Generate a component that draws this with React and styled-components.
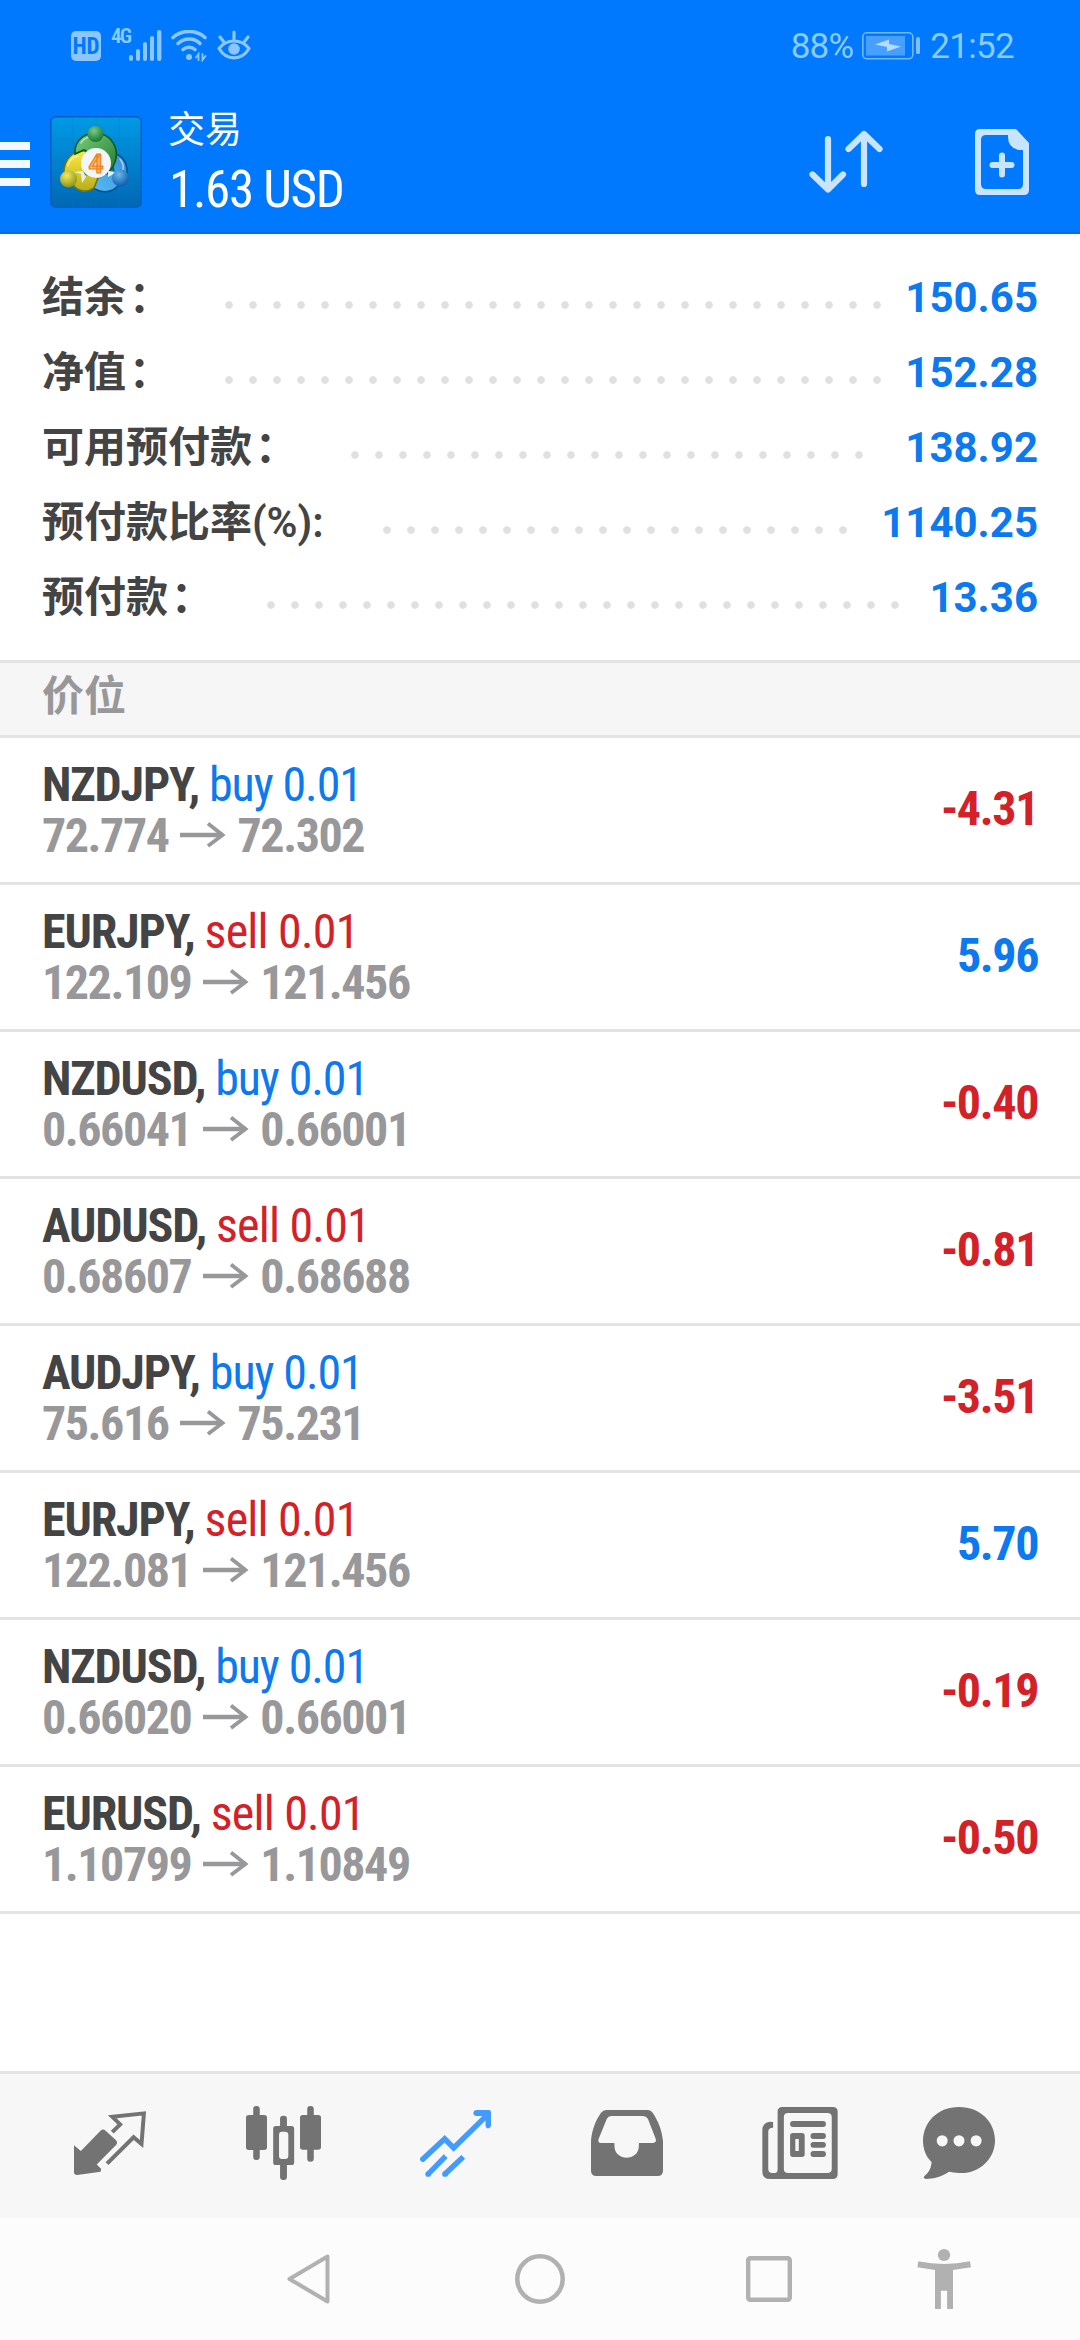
import React from 'react';
import styled, { createGlobalStyle } from 'styled-components';

const BLUE = '#0079ff';
const TEXT_BLUE = '#0c79ef';
const TEXT_RED = '#d42027';
const GRAY = '#737373';

const Global = createGlobalStyle`
    body {
        margin: 0;
        background: #fff;
        font-family: Roboto, 'Noto Sans CJK SC', sans-serif;
    }
    svg {
        display: block;
        flex: none;
    }
`
const Screen = styled.div`
    width: 1080px;
    height: 2340px;
    display: flex;
    flex-direction: column;
    overflow: hidden;
`

/* header */
const Header = styled.header`
    height: 232px;
    background: ${BLUE};
    border-bottom: 2px solid #0a6ce0;
`
const StatusBar = styled.div`
    height: 92px;
    padding: 0 66px 0 71px;
    box-sizing: border-box;
    display: flex;
    align-items: center;
    color: #8accff;
    font-size: 35px;
`
const HdBadge = styled.span`
    width: 30px;
    height: 30px;
    margin-right: 10px;
    border-radius: 5px;
    background: #8cc6ff;
    color: ${BLUE};
    font: 700 23px/31px 'Roboto Condensed', Roboto, sans-serif;
    text-align: center;
`
const Network = styled.span`
    align-self: flex-start;
    width: 18px;
    margin-top: 24px;
    font: 600 21px/24px 'Roboto Condensed', Roboto, sans-serif;
    letter-spacing: -1.8px;
`
const StatusIcons = styled.div`
    display: flex;
    align-items: center;
    gap: 9px;
    flex: 1;
`
const Percent = styled.span`
    margin-right: 9px;
    letter-spacing: -0.8px;
`
const Clock = styled.span`
    margin-left: 10px;
    letter-spacing: -0.7px;
`
const AppBar = styled.div`
    height: 140px;
    padding-right: 51px;
    display: flex;
    align-items: center;
`
const Menu = styled.div`
    width: 30px;
    margin: 4px 20px 0 0;
    display: flex;
    flex-direction: column;
    gap: 10px;
`
const MenuLine = styled.i`
    height: 8px;
    background: #f2f9ff;
`
const Heading = styled.div`
    flex: 1;
    margin: -2px 0 0 26px;
    color: #fff;
`
const Title = styled.div`
    font-size: 37px;
    line-height: 58px;
`
const Total = styled.div`
    font: 400 51px/60px 'Roboto Condensed', Roboto, sans-serif;
    letter-spacing: -1.3px;
    padding-left: 1px;
`
const Actions = styled.div`
    display: flex;
    align-items: center;
    gap: 92px;
`

/* account summary */
const Summary = styled.section`
    padding: 26px 42px 25px;
    border-bottom: 3px solid #e3e3e3;
`
const SummaryRow = styled.div`
    height: 75px;
    display: flex;
    font-size: 42px;
    font-weight: 700;
    line-height: 75px;
    white-space: nowrap;
`
const Label = styled.span`
    color: #444;
`
const Unit = styled.span`
    margin-right: 2px;
    font-weight: 600;
`
const Colon = styled.span`
    padding-left: 3px;
    margin-right: -3px;
`
const Dots = styled.span`
    width: ${(p) => p.$count * 24}px;
    margin-left: 49px;
    background: radial-gradient(circle at 12px 45px, #e0e0e0 3.4px, transparent 4.2px) 0 0 / 24px 75px repeat-x;
`
const Amount = styled.span`
    margin-left: auto;
    color: ${TEXT_BLUE};
`

/* positions */
const SectionTitle = styled.h2`
    height: 72px;
    margin: 0;
    padding-left: 42px;
    border-bottom: 3px solid #e3e3e3;
    background: #f6f6f6;
    color: #98989a;
    font-size: 42px;
    font-weight: 700;
    line-height: 68px;
`
const Position = styled.div`
    height: 144px;
    padding: 0 42px;
    border-bottom: 3px solid #e3e3e3;
    display: flex;
    align-items: center;
    justify-content: space-between;
    font: 700 48px/51px 'Roboto Condensed', Roboto, sans-serif;
`
const Info = styled.div`
    margin-bottom: 1px;
`
const Symbol = styled.div`
    color: #444;
    letter-spacing: -1.15px;
`
const Side = styled.span`
    color: ${(p) => (p.$sell ? TEXT_RED : TEXT_BLUE)};
    font-weight: 400;
    letter-spacing: ${(p) => (p.$sell ? -0.8 : -1.1)}px;
`
const Prices = styled.div`
    display: flex;
    align-items: center;
    gap: 11.5px;
    color: #98989a;
    letter-spacing: -1.45px;
`
const Profit = styled.div`
    margin-bottom: 3px;
    color: ${(p) => (p.$loss ? TEXT_RED : TEXT_BLUE)};
    letter-spacing: -1.4px;
`

/* bottom bars */
const Tabs = styled.nav`
    height: 138px;
    margin-top: auto;
    padding: 0 0 6px 74px;
    border-top: 3px solid #e4e4e4;
    background: #f7f7f7;
    display: flex;
    align-items: center;
    gap: 99.5px;

    svg:last-child {
        margin-left: -15px;
    }
`
const NavBar = styled.div`
    height: 122px;
    background: #fcfcfc;
    display: flex;
    align-items: center;
    padding-left: 287px;
`
const NavItem = styled.div`
    margin-right: ${(p) => p.$gap}px;
`

const SignalIcon = () => (
    <svg width="33" height="32" viewBox="0 0 33 32" fill="#8cc6ff">
        <rect x="0" y="25" width="4" height="6" rx="2" />
        <rect x="7" y="19" width="4" height="12" rx="2" />
        <rect x="14" y="12" width="4" height="19" rx="2" />
        <rect x="21" y="6" width="4" height="25" rx="2" />
        <rect x="28" y="0" width="4.4" height="31" rx="2" />
    </svg>
)

const WifiIcon = () => (
    <svg width="37" height="32" viewBox="0 0 37 32" fill="none" stroke="#8cc6ff" strokeWidth="3.6" strokeLinecap="round">
        <path d="M2 7.5C11 -.5 25 -.5 34 7.5" />
        <path d="M7 13.5C13.500 7.500 23 7.500 29 13.500" />
        <path d="M12 19.500C15.500 16.500 20.500 16.500 24 19.500" />
        <circle cx="18" cy="27" r="3" fill="#8cc6ff" stroke="none" />
        <path d="M25 27.500l2.500-3.500v6M31.500 24v6l3-4" strokeWidth="1.800" />
    </svg>
)

const EyeIcon = () => (
    <svg width="34" height="32" viewBox="0 0 34 32" fill="none" stroke="#8cc6ff" strokeWidth="3.2" strokeLinecap="round">
        <path d="M2 18.500C9.500 8.500 24.500 8.500 32 18.500C24.500 31 9.500 31 2 18.500Z" strokeLinejoin="round" />
        <circle cx="17" cy="19" r="5.800" fill="#8cc6ff" stroke="none" />
        <path d="M17 2v7M3 7l3.500 4.500M31 7l-3.500 4.500" />
    </svg>
)

const BatteryIcon = () => (
    <svg width="58" height="28" viewBox="0 0 58 28">
        <rect x=".8" y=".8" width="50" height="26" rx="4" fill="none" stroke="#6fb7ff" strokeWidth="1.600" />
        <rect x="4" y="4" width="39" height="19.500" fill="#479fff" />
        <path d="M13 12.500L27 7.500V12L39 14.500L25 19.500V15Z" fill="#b5dcff" />
        <rect x="54" y="5" width="4" height="17" rx="1.500" fill="#7fbfff" />
    </svg>
)

const Logo = () => (
    <svg width="92" height="92" viewBox="0 0 92 92">
        <defs>
            <linearGradient id="bg" x1="0" y1="0" x2="0" y2="1">
                <stop offset="0" stopColor="#009ae6" />
                <stop offset="1" stopColor="#0068b4" />
            </linearGradient>
            <linearGradient id="green" x1="0" y1="0" x2="1" y2="1">
                <stop offset="0" stopColor="#7ccf7e" />
                <stop offset="1" stopColor="#1f7a2c" />
            </linearGradient>
            <linearGradient id="yellow" x1="0" y1="0" x2="0" y2="1">
                <stop offset="0" stopColor="#ffe83a" />
                <stop offset="1" stopColor="#b7ad1c" />
            </linearGradient>
            <linearGradient id="blue" x1="1" y1="0" x2="0" y2="1">
                <stop offset="0" stopColor="#2f8fdc" />
                <stop offset="1" stopColor="#5cc0f5" />
            </linearGradient>
            <radialGradient id="greenHead" cx=".4" cy=".3" r=".7">
                <stop offset="0" stopColor="#7cc98a" />
                <stop offset="1" stopColor="#157a2e" />
            </radialGradient>
            <radialGradient id="yellowHead" cx=".4" cy=".3" r=".7">
                <stop offset="0" stopColor="#f2ea62" />
                <stop offset="1" stopColor="#8f9512" />
            </radialGradient>
            <radialGradient id="blueHead" cx=".4" cy=".3" r=".7">
                <stop offset="0" stopColor="#6bb8ea" />
                <stop offset="1" stopColor="#0a5fae" />
            </radialGradient>
        </defs>
        <rect x=".8" y=".8" width="90.400" height="90.400" rx="5" fill="url(#bg)" stroke="#0560c4" strokeWidth="1.600" />
        <path d="M0 23H92M0 46H92M0 69H92M23 0V92M46 0V92M69 0V92" stroke="#0a7ac8" strokeWidth=".6" opacity=".5" />
        <g strokeWidth="1.600">
            <path d="M60 37C71 37 78 46 77 58L70 66C66 76 54 78 45 73C40 70 36 65 35 60L46 60L64 56Z" fill="url(#blue)" stroke="#0b4f93" />
            <path d="M36 35C24 33 13 43 14 58L22 66C25 75 36 78 44 72L48 62L34 58Z" fill="url(#yellow)" stroke="#6d7612" />
            <path d="M25 38C24 28 31 19 40 18H51C61 20 68 31 66 42C65 49 62 53 58 56L50 42L34 34Z" fill="url(#green)" stroke="#0c5a1e" />
        </g>
        <path d="M31 27C33 23 36 22 39 21M18 50C19 44 23 41 28 40M70 43C73 47 74 50 73 54" stroke="#fff" strokeWidth="1.600" strokeLinecap="round" fill="none" opacity=".55" />
        <path d="M33 55L24 56L31 58L32 67L36 61ZM58 55L67 56L62 59L58 61Z" fill="#dff2ee" />
        <circle cx="45.500" cy="18" r="8" fill="url(#greenHead)" />
        <circle cx="18.500" cy="63" r="8.500" fill="url(#yellowHead)" />
        <circle cx="70.500" cy="62" r="8.500" fill="url(#blueHead)" />
        <circle cx="46" cy="47" r="15" fill="#f3f5f8" />
        <text x="46" y="56.500" textAnchor="middle" fontFamily="Roboto" fontWeight="700" fontSize="26" fill="#fdb35e" stroke="#ee8124" strokeWidth="1.200">4</text>
    </svg>
)

const SortIcon = () => (
    <svg width="74" height="64" viewBox="0 0 74 64" fill="none" stroke="#c9e4ff" strokeWidth="6.200" strokeLinecap="round" strokeLinejoin="round">
        <path d="M19 9V59M3.500 44.500L19 59.500L34 44.500" />
        <path d="M55 54V4M39.500 19L55 4L70.500 19" />
    </svg>
)

const NewOrderIcon = () => (
    <svg width="54" height="66" viewBox="0 0 54 66">
        <path
            fillRule="evenodd"
            fill="#c9e4ff"
            d="M5 0H41L54 14V61Q54 66 49 66H5Q0 66 0 61V5Q0 0 5 0ZM11 6Q6 6 6 11V55Q6 60 11 60H43Q48 60 48 55V21H44Q33 19 33 8V6Z"
        />
        <path d="M27 26.500V45.500M17.500 36H36.500" stroke="#c9e4ff" strokeWidth="6" strokeLinecap="round" />
    </svg>
)

const ArrowIcon = () => (
    <svg width="46" height="26" viewBox="0 0 46 26" fill="none" stroke="#98989a" strokeWidth="4.400">
        <path d="M0 13H43" />
        <path d="M28 1.500L42.500 13L28 24" strokeWidth="3.800" />
    </svg>
)

const QuotesIcon = () => (
    <svg width="72" height="64" viewBox="215 158 209 190" preserveAspectRatio="none">
        <path fill={GRAY} d="M215 260L235 277L292 217Q299 210 306 216L337 245Q343 252 337 259L281 317L294 330L292 338L224 348Q215 348 215 340Z" />
        <path fill="none" stroke={GRAY} strokeWidth="11.500" d="M326 221L349 198L326 175L418 165L411 256L388 236L311 314" />
    </svg>
)

const ChartIcon = () => (
    <svg width="75" height="74" viewBox="708 141 218 222" preserveAspectRatio="none" fill={GRAY}>
        <rect x="708" y="168" width="61" height="105" rx="8" />
        <rect x="729" y="141" width="19" height="162" rx="9" />
        <rect x="865" y="168" width="61" height="104" rx="8" />
        <rect x="886" y="141" width="19" height="167" rx="9" />
        <rect x="807" y="170" width="20" height="45" rx="9" />
        <rect x="807" y="300" width="20" height="63" rx="9" />
        <path fillRule="evenodd" d="M795 201H840Q848 201 848 209V311Q848 318 840 318H795Q787 318 787 311V209Q787 201 795 201ZM812 218Q804 218 804 228V291Q804 300 812 300H822Q831 300 831 291V228Q831 218 822 218Z" />
    </svg>
)

const TradeIcon = () => (
    <svg width="71" height="67" viewBox="1213 149 207 200" preserveAspectRatio="none">
        <g fill="none" stroke="#429bff" strokeWidth="16">
            <path d="M1221 296L1285 235L1311 262L1405 168" strokeLinecap="round" />
            <path d="M1237 340L1288 287M1286 340L1339 289" />
        </g>
        <circle cx="1237" cy="340" r="8.500" fill="#429bff" />
        <circle cx="1286" cy="340" r="8.500" fill="#429bff" />
        <path fill="#429bff" d="M1376 149H1414Q1420 149 1420 156V197Q1418 204 1411 204Q1404 203 1404 196V179L1392 167H1376Q1368 165 1368 158Q1369 150 1376 149Z" />
    </svg>
)

const HistoryIcon = () => (
    <svg width="72" height="66" viewBox="147 150 209 198" preserveAspectRatio="none">
        <path
            fill={GRAY}
            fillRule="evenodd"
            d="M192 150H312Q321 150 326 158C343 184 353 212 356 243V334Q355 348 341 348H162Q148 348 147 334V243C149 214 158 185 176 158Q182 150 192 150ZM206 168Q197 168 193 176L169 237Q166 249 176 249H215V258C216 305 285 305 286 258V249H327Q338 247 335 237L312 176Q307 168 298 168Z"
        />
    </svg>
)

const NewsIcon = () => (
    <svg width="76" height="72" viewBox="645 141 219 216" preserveAspectRatio="none">
        <path
            fill={GRAY}
            fillRule="evenodd"
            d="M704 141H849Q863 141 863 155V343Q863 357 849 357H668Q646 357 646 335V208Q648 187 668 185L677 186V203Q663 203 663 215V326Q663 339 675 339H682Q690 339 690 326V155Q690 141 704 141ZM720 159Q708 159 708 171V327Q708 339 720 339H833Q846 339 846 327V171Q846 159 833 159Z"
        />
        <g fill={GRAY}>
            <rect x="726" y="183" width="103" height="18" rx="8" />
            <rect x="785" y="219" width="44" height="18" rx="8" />
            <rect x="785" y="246" width="44" height="17" rx="8" />
            <rect x="785" y="273" width="44" height="18" rx="8" />
            <path fillRule="evenodd" d="M734 219H760Q768 219 768 227V283Q768 291 760 291H734Q726 291 726 283V227Q726 219 734 219ZM741 237V273H751V237Z" />
        </g>
    </svg>
)

const ChatIcon = () => (
    <svg width="72" height="72" viewBox="1108 140 210 217" preserveAspectRatio="none">
        <path
            fill={GRAY}
            d="M1213 140C1275 140 1318 185 1318 241C1318 298 1270 343 1213 339Q1196 338 1184 335C1162 350 1139 356 1116 357Q1106 354 1113 347C1127 336 1132 322 1133 306C1116 289 1108 266 1108 241C1109 185 1151 140 1213 140Z"
        />
        <g fill="#f7f7f7">
            <ellipse cx="1164" cy="242" rx="16" ry="17" />
            <ellipse cx="1213" cy="242" rx="16" ry="17" />
            <ellipse cx="1263" cy="242" rx="16" ry="17" />
        </g>
    </svg>
)

const summary = [
    { label: '结余', value: '150.65', dots: 28 },
    { label: '净值', value: '152.28', dots: 28 },
    { label: '可用预付款', value: '138.92', dots: 22 },
    { label: '预付款比率', unit: '(%):', value: '1140.25', dots: 20 },
    { label: '预付款', value: '13.36', dots: 27 },
]

const positions = [
    { symbol: 'NZDJPY', side: 'buy', open: '72.774', current: '72.302', profit: '-4.31' },
    { symbol: 'EURJPY', side: 'sell', open: '122.109', current: '121.456', profit: '5.96' },
    { symbol: 'NZDUSD', side: 'buy', open: '0.66041', current: '0.66001', profit: '-0.40' },
    { symbol: 'AUDUSD', side: 'sell', open: '0.68607', current: '0.68688', profit: '-0.81' },
    { symbol: 'AUDJPY', side: 'buy', open: '75.616', current: '75.231', profit: '-3.51' },
    { symbol: 'EURJPY', side: 'sell', open: '122.081', current: '121.456', profit: '5.70' },
    { symbol: 'NZDUSD', side: 'buy', open: '0.66020', current: '0.66001', profit: '-0.19' },
    { symbol: 'EURUSD', side: 'sell', open: '1.10799', current: '1.10849', profit: '-0.50' },
]

export default function App() {
    return (
        <Screen>
            <Global />
            <Header>
                <StatusBar>
                    <HdBadge>HD</HdBadge>
                    <Network>4G</Network>
                    <StatusIcons>
                        <SignalIcon />
                        <WifiIcon />
                        <EyeIcon />
                    </StatusIcons>
                    <Percent>88%</Percent>
                    <BatteryIcon />
                    <Clock>21:52</Clock>
                </StatusBar>
                <AppBar>
                    <Menu>
                        <MenuLine />
                        <MenuLine />
                        <MenuLine />
                    </Menu>
                    <Logo />
                    <Heading>
                        <Title>交易</Title>
                        <Total>1.63 USD</Total>
                    </Heading>
                    <Actions>
                        <SortIcon />
                        <NewOrderIcon />
                    </Actions>
                </AppBar>
            </Header>
            <Summary>
                {summary.map((item) => (
                    <SummaryRow key={item.label}>
                        <Label>
                            {item.label}
                            {item.unit ? <Unit>{item.unit}</Unit> : <Colon>：</Colon>}
                        </Label>
                        <Dots $count={item.dots} />
                        <Amount>{item.value}</Amount>
                    </SummaryRow>
                ))}
            </Summary>
            <SectionTitle>价位</SectionTitle>
            {positions.map((item) => (
                <Position key={item.symbol + item.open}>
                    <Info>
                        <Symbol>
                            {item.symbol}, <Side $sell={item.side === 'sell'}>{item.side} 0.01</Side>
                        </Symbol>
                        <Prices>
                            <span>{item.open}</span>
                            <ArrowIcon />
                            <span>{item.current}</span>
                        </Prices>
                    </Info>
                    <Profit $loss={item.profit.startsWith('-')}>{item.profit}</Profit>
                </Position>
            ))}
            <Tabs>
                <QuotesIcon />
                <ChartIcon />
                <TradeIcon />
                <HistoryIcon />
                <NewsIcon />
                <ChatIcon />
            </Tabs>
            <NavBar>
                <NavItem $gap={185}>
                    <svg width="43" height="50" viewBox="0 0 43 50" fill="none" stroke="#b1b1b1" strokeWidth="4" strokeLinejoin="round">
                        <path d="M40.500 2.500V47.500L2.500 25Z" />
                    </svg>
                </NavItem>
                <NavItem $gap={181}>
                    <svg width="50" height="50" viewBox="0 0 50 50" fill="none" stroke="#b1b1b1" strokeWidth="4.500">
                        <circle cx="25" cy="25" r="22.700" />
                    </svg>
                </NavItem>
                <NavItem $gap={125}>
                    <svg width="46" height="46" viewBox="0 0 46 46" fill="none" stroke="#b1b1b1" strokeWidth="4.400">
                        <rect x="2.200" y="2.200" width="41.600" height="41.600" rx="2" />
                    </svg>
                </NavItem>
                <NavItem $gap={0}>
                    <svg width="54" height="60" viewBox="1095 566 156 181" preserveAspectRatio="none" fill="#b1b1b1">
                        <circle cx="1173" cy="584" r="18" />
                        <path d="M1099 603Q1173 619 1248 603L1251 621L1199 629V747H1182V692H1164V747H1147V629L1096 621Z" />
                    </svg>
                </NavItem>
            </NavBar>
        </Screen>
    )
}
